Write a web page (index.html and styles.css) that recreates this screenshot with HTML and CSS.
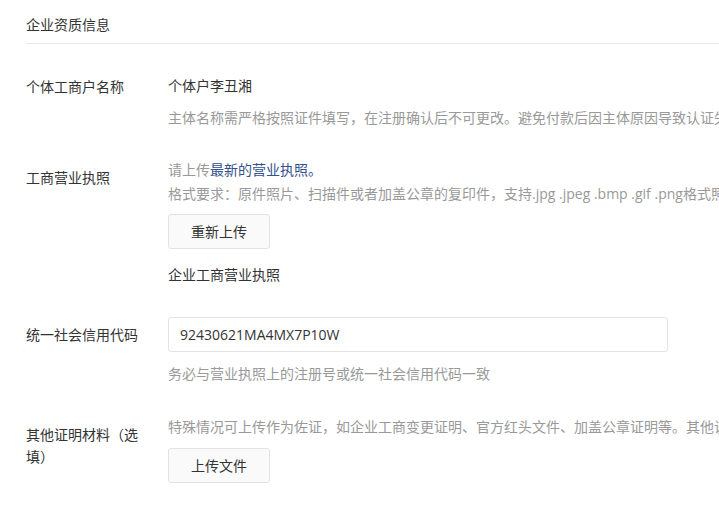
FILE: index.html
```html
<!DOCTYPE html>
<html lang="zh-CN">
<head>
<meta charset="utf-8">
<title>企业资质信息</title>
<link rel="stylesheet" href="styles.css">
</head>
<body>
<div class="page">
  <div class="title">企业资质信息</div>
  <div class="form">
    <div class="row row-name">
      <div class="label">个体工商户名称</div>
      <div class="content">
        <div class="value">个体户李丑湘</div>
        <div class="hint hint-name">主体名称需严格按照证件填写，在注册确认后不可更改。避免付款后因主体原因导致认证失败，请仔细核对。</div>
      </div>
    </div>
    <div class="row row-license">
      <div class="label">工商营业执照</div>
      <div class="content">
        <div class="hint">请上传<span class="em">最新的营业执照。</span></div>
        <div class="hint">格式要求：原件照片、扫描件或者加盖公章的复印件，支持.jpg .jpeg .bmp .gif .png格式照片，大小不超过2M。</div>
        <button class="btn btn-reupload">重新上传</button>
        <div class="file-name">企业工商营业执照</div>
      </div>
    </div>
    <div class="row row-code">
      <div class="label">统一社会信用代码</div>
      <div class="content">
        <input class="input" type="text" value="92430621MA4MX7P10W">
        <div class="hint hint-code">务必与营业执照上的注册号或统一社会信用代码一致</div>
      </div>
    </div>
    <div class="row row-other">
      <div class="label label-wrap">其他证明材料（选填）</div>
      <div class="content">
        <div class="hint">特殊情况可上传作为佐证，如企业工商变更证明、官方红头文件、加盖公章证明等。其他说明材料也可一并上传。</div>
        <button class="btn btn-upload">上传文件</button>
      </div>
    </div>
  </div>
</div>
</body>
</html>
```

FILE: styles.css
```css
html, body {
  margin: 0;
  padding: 0;
  background: #ffffff;
  overflow: hidden;
}
body {
  font-family: "Open Sans", "Noto Sans CJK SC", "Noto Sans", sans-serif;
  font-size: 14px;
  color: #333333;
  width: 719px;
  height: 528px;
}
.page {
  padding-left: 26px;
}
.title {
  padding-top: 14px;
  line-height: 22px;
  padding-bottom: 7px;
  border-bottom: 1px solid #e8e8e8;
  color: #333;
}
.form {
  padding-top: 25px;
}
.row {
  display: flex;
  align-items: flex-start;
}
.label {
  width: 120px;
  flex: none;
  margin-right: 22px;
  padding-top: 7px;
  line-height: 22px;
  color: #333;
  white-space: normal;
}
.content {
  flex: 1;
  min-width: 0;
  white-space: nowrap;
}
.value {
  line-height: 34px;
  color: #333;
}
.hint {
  line-height: 24px;
  color: #999999;
  white-space: nowrap;
}
.hint-name {
  margin-top: 3px;
}
.em {
  color: #34508e;
}
.row-license {
  margin-top: 28px;
}
.row-license .label {
  padding-top: 9px;
}
.btn {
  display: block;
  font-family: inherit;
  font-size: 14px;
  color: #333;
  background: #fafafa;
  border: 1px solid #e3e3e3;
  border-radius: 3px;
  height: 35px;
  width: 102px;
  padding: 0;
  line-height: 33px;
  text-align: center;
}
.btn-reupload {
  margin-top: 8px;
}
.file-name {
  margin-top: 15px;
  line-height: 22px;
  color: #333;
}
.row-code {
  margin-top: 31px;
}
.row-code .label {
  padding-top: 7px;
}
.input {
  display: block;
  box-sizing: border-box;
  width: 500px;
  height: 35px;
  border: 1px solid #e3e3e3;
  border-radius: 3px;
  padding: 0 11px;
  font-family: inherit;
  font-size: 14px;
  color: #333;
  outline: none;
  background: #fff;
}
.hint-code {
  margin-top: 10px;
}
.row-other {
  margin-top: 29px;
}
.row-other .label {
  padding-top: 9px;
}
.btn-upload {
  margin-top: 9px;
}
```
